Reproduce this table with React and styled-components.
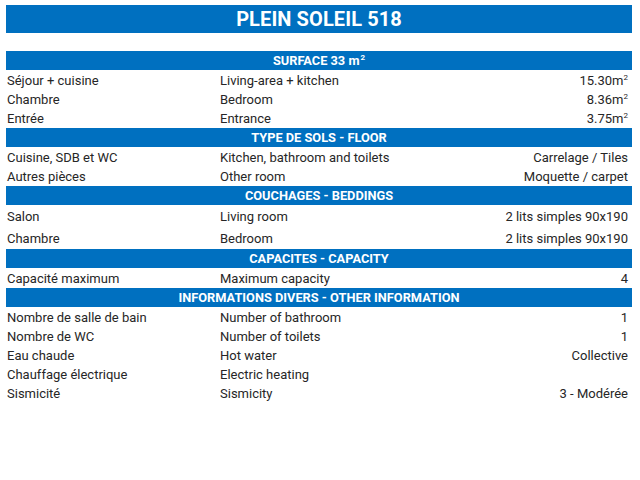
import React from 'react';
import styled, { createGlobalStyle } from 'styled-components';

const GlobalStyle = createGlobalStyle`
  body {
    margin: 0;
    background: #ffffff;
    font-family: Roboto, 'Noto Sans', sans-serif;
    color: #262626;
  }
`;

const sections = [
  {
    title: (
      <>
        SURFACE 33 m<sup>2</sup>
      </>
    ),
    rows: [
      ['Séjour + cuisine', 'Living-area + kitchen', '15.30', true],
      ['Chambre', 'Bedroom', '8.36', true],
      ['Entrée', 'Entrance', '3.75', true],
    ],
  },
  {
    title: 'TYPE DE SOLS - FLOOR',
    rows: [
      ['Cuisine, SDB et WC', 'Kitchen, bathroom and toilets', 'Carrelage / Tiles'],
      ['Autres pièces', 'Other room', 'Moquette / carpet'],
    ],
  },
  {
    title: 'COUCHAGES - BEDDINGS',
    tall: true,
    rows: [
      ['Salon', 'Living room', '2 lits simples 90x190'],
      ['Chambre', 'Bedroom', '2 lits simples 90x190'],
    ],
  },
  {
    title: 'CAPACITES - CAPACITY',
    rows: [['Capacité maximum', 'Maximum capacity', '4']],
  },
  {
    title: 'INFORMATIONS DIVERS - OTHER INFORMATION',
    rows: [
      ['Nombre de salle de bain', 'Number of bathroom', '1'],
      ['Nombre de WC', 'Number of toilets', '1'],
      ['Eau chaude', 'Hot water', 'Collective'],
      ['Chauffage électrique', 'Electric heating', ''],
      ['Sismicité', 'Sismicity', '3 - Modérée'],
    ],
  },
];

const App = () => (
  <Page>
    <GlobalStyle />
    <TitleBar>PLEIN SOLEIL 518</TitleBar>
    <Table>
      {sections.map((section, i) => (
        <Section key={i}>
          <SectionBar>
            <span>{section.title}</span>
          </SectionBar>
          {section.rows.map(([fr, en, value, area], j) => (
            <Row key={j} $tall={section.tall}>
              <Cell>{fr}</Cell>
              <Cell>{en}</Cell>
              <Value>
                {value}
                {area && (
                  <>
                    m<sup>2</sup>
                  </>
                )}
              </Value>
            </Row>
          ))}
        </Section>
      ))}
    </Table>
  </Page>
);

export default App;

const Page = styled.div`
  width: 640px;
  height: 480px;
  box-sizing: border-box;
  padding: 5px 8px 0 6px;
`;

const TitleBar = styled.div`
  height: 28px;
  background: #0070c0;
  color: #ffffff;
  font-weight: 700;
  font-size: 20px;
  letter-spacing: 0.1px;
  display: flex;
  align-items: center;
  justify-content: center;
`;

const Table = styled.div`
  margin-top: 17px;
  display: flex;
  flex-direction: column;
`;

const Section = styled.div`
  display: flex;
  flex-direction: column;
`;

const SectionBar = styled.div`
  height: 19px;
  background: #0070c0;
  color: #ffffff;
  font-weight: 700;
  font-size: 12.8px;
  display: flex;
  align-items: center;
  justify-content: center;
  border-top: 1px solid #ffffff;

  sup {
    font-size: 8px;
    line-height: 0;
    vertical-align: 5px;
    margin-left: 1px;
  }
`;

const Row = styled.div`
  display: grid;
  grid-template-columns: 213px 1fr auto;
  align-items: center;
  box-sizing: border-box;
  height: ${({ $tall }) => ($tall ? '21.5px' : '19px')};
  font-size: 13px;
  padding: 2px 4px 0 1px;
`;

const Cell = styled.span`
  white-space: nowrap;
`;

const Value = styled.span`
  white-space: nowrap;
  text-align: right;

  sup {
    font-size: 8px;
    line-height: 0;
    vertical-align: 5px;
  }
`;
